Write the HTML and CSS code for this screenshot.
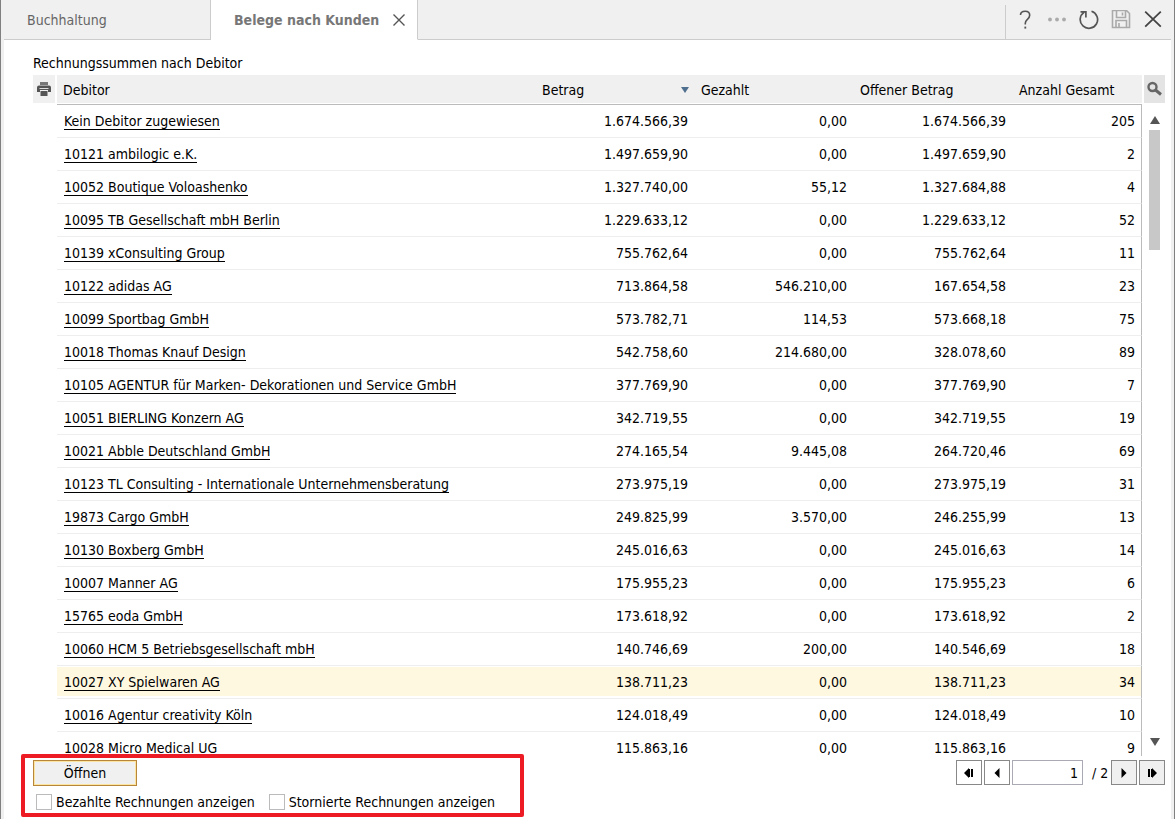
FILE: index.html
```html
<!DOCTYPE html>
<html lang="de">
<head>
<meta charset="utf-8">
<title>Belege nach Kunden</title>
<link rel="stylesheet" href="styles.css">
</head>
<body>
<div class="window">
  <header class="topbar">
    <button class="tab" type="button">Buchhaltung</button>
    <div class="tab tab-active">
      <span>Belege nach Kunden</span>
      <button class="icon-btn tab-close" type="button" aria-label="Tab schließen">
        <svg width="14" height="14" viewBox="0 0 14 14"><path d="M1.500 1.500L12.500 12.500M12.500 1.500L1.500 12.500" stroke="#555" stroke-width="1.400" fill="none"/></svg>
      </button>
    </div>
    <div class="tools">
      <button class="icon-btn" type="button" aria-label="Hilfe">
        <svg width="20" height="20" viewBox="0 0 20 20"><path d="M5.500 5C5.500 2.500 7.500 1.200 10.200 1.200C13 1.200 14.700 2.800 14.700 5.300C14.700 7.500 13.500 8.500 12.200 9.600C10.900 10.700 10.300 11.500 10.300 13.300V14.500" stroke="#555" stroke-width="1.600" fill="none"/><rect x="9.400" y="16.600" width="1.800" height="2" fill="#555"/></svg>
      </button>
      <button class="icon-btn" type="button" aria-label="Mehr">
        <svg width="20" height="20" viewBox="0 0 20 20"><g fill="#aaa"><circle cx="3" cy="9.500" r="1.900"/><circle cx="10" cy="9.500" r="1.900"/><circle cx="17" cy="9.500" r="1.900"/></g></svg>
      </button>
      <button class="icon-btn" type="button" aria-label="Aktualisieren">
        <svg width="20" height="20" viewBox="0 0 20 20"><path d="M12.500 1.300A8.700 8.700 0 1 1 5 2.400M1.500 1.800H6.900V7.400" stroke="#555" stroke-width="1.700" fill="none"/></svg>
      </button>
      <button class="icon-btn" type="button" aria-label="Speichern">
        <svg width="20" height="20" viewBox="0 0 20 20"><path d="M1.500 0.500H15.500L18.500 3.500V17.500H1.500ZM5.500 0.500V7.500H14.500V0.500M11.500 2.500V5.500M5 17.500V10.500H15.500V17.500M8 13V17.500" stroke="#aaa" stroke-width="1.600" fill="none"/></svg>
      </button>
      <button class="icon-btn" type="button" aria-label="Schließen">
        <svg width="20" height="20" viewBox="0 0 20 20"><path d="M2.200 1.700L17.800 16.700M17.800 1.700L2.200 16.700" stroke="#444" stroke-width="1.800" fill="none"/></svg>
      </button>
    </div>
  </header>

  <main class="content">
    <h1 class="title">Rechnungssummen nach Debitor</h1>
    <div class="grid">
      <button class="side-btn" type="button" aria-label="Drucken">
        <svg width="14" height="14" viewBox="0 0 14 14"><path d="M3 0H11V3H3Z" fill="#777"/><path d="M2 3.500H12Q14 3.500 14 5.500V10H11V8H3V10H0V5.500Q0 3.500 2 3.500Z" fill="#555"/><path d="M2.500 6.500H11.500" stroke="#ddd"/><path d="M3.500 9H10.500V14H3.500Z" fill="#555"/></svg>
      </button>
      <div class="table-wrap">
        <table class="table">
          <colgroup><col><col class="col-sum"><col class="col-sum"><col class="col-sum"><col class="col-count"></colgroup>
          <thead><tr>
            <th>Debitor</th>
            <th><span class="sorted">Betrag <svg width="8" height="6" viewBox="0 0 8 6"><path d="M0 0H8L4 6Z" fill="#4f6f8f"/></svg></span></th>
            <th>Gezahlt</th><th>Offener Betrag</th><th>Anzahl Gesamt</th>
          </tr></thead>
          <tbody>
            <tr><td><a href="#">Kein Debitor zugewiesen</a></td><td>1.674.566,39</td><td>0,00</td><td>1.674.566,39</td><td>205</td></tr>
            <tr><td><a href="#">10121 ambilogic e.K.</a></td><td>1.497.659,90</td><td>0,00</td><td>1.497.659,90</td><td>2</td></tr>
            <tr><td><a href="#">10052 Boutique Voloashenko</a></td><td>1.327.740,00</td><td>55,12</td><td>1.327.684,88</td><td>4</td></tr>
            <tr><td><a href="#">10095 TB Gesellschaft mbH Berlin</a></td><td>1.229.633,12</td><td>0,00</td><td>1.229.633,12</td><td>52</td></tr>
            <tr><td><a href="#">10139 xConsulting Group</a></td><td>755.762,64</td><td>0,00</td><td>755.762,64</td><td>11</td></tr>
            <tr><td><a href="#">10122 adidas AG</a></td><td>713.864,58</td><td>546.210,00</td><td>167.654,58</td><td>23</td></tr>
            <tr><td><a href="#">10099 Sportbag GmbH</a></td><td>573.782,71</td><td>114,53</td><td>573.668,18</td><td>75</td></tr>
            <tr><td><a href="#">10018 Thomas Knauf Design</a></td><td>542.758,60</td><td>214.680,00</td><td>328.078,60</td><td>89</td></tr>
            <tr><td><a href="#">10105 AGENTUR für Marken- Dekorationen und Service GmbH</a></td><td>377.769,90</td><td>0,00</td><td>377.769,90</td><td>7</td></tr>
            <tr><td><a href="#">10051 BIERLING Konzern AG</a></td><td>342.719,55</td><td>0,00</td><td>342.719,55</td><td>19</td></tr>
            <tr><td><a href="#">10021 Abble Deutschland GmbH</a></td><td>274.165,54</td><td>9.445,08</td><td>264.720,46</td><td>69</td></tr>
            <tr><td><a href="#">10123 TL Consulting - Internationale Unternehmensberatung</a></td><td>273.975,19</td><td>0,00</td><td>273.975,19</td><td>31</td></tr>
            <tr><td><a href="#">19873 Cargo GmbH</a></td><td>249.825,99</td><td>3.570,00</td><td>246.255,99</td><td>13</td></tr>
            <tr><td><a href="#">10130 Boxberg GmbH</a></td><td>245.016,63</td><td>0,00</td><td>245.016,63</td><td>14</td></tr>
            <tr><td><a href="#">10007 Manner AG</a></td><td>175.955,23</td><td>0,00</td><td>175.955,23</td><td>6</td></tr>
            <tr><td><a href="#">15765 eoda GmbH</a></td><td>173.618,92</td><td>0,00</td><td>173.618,92</td><td>2</td></tr>
            <tr><td><a href="#">10060 HCM 5 Betriebsgesellschaft mbH</a></td><td>140.746,69</td><td>200,00</td><td>140.546,69</td><td>18</td></tr>
            <tr class="highlight"><td><a href="#">10027 XY Spielwaren AG</a></td><td>138.711,23</td><td>0,00</td><td>138.711,23</td><td>34</td></tr>
            <tr><td><a href="#">10016 Agentur creativity Köln</a></td><td>124.018,49</td><td>0,00</td><td>124.018,49</td><td>10</td></tr>
            <tr><td><a href="#">10028 Micro Medical UG</a></td><td>115.863,16</td><td>0,00</td><td>115.863,16</td><td>9</td></tr>
          </tbody>
        </table>
      </div>
      <div class="side">
        <button class="side-btn search" type="button" aria-label="Suchen">
          <svg width="16" height="16" viewBox="0 0 16 16"><circle cx="5.500" cy="6" r="4" stroke="#666" stroke-width="2.400" fill="none"/><path d="M8.500 9L14 13.500" stroke="#666" stroke-width="3"/></svg>
        </button>
        <div class="scrollbar">
          <button class="icon-btn" type="button" aria-label="Nach oben"><svg width="10" height="8" viewBox="0 0 10 8"><path d="M5 0L10 8H0Z" fill="#555"/></svg></button>
          <div class="track"><div class="thumb"></div></div>
          <button class="icon-btn" type="button" aria-label="Nach unten"><svg width="10" height="8" viewBox="0 0 10 8"><path d="M0 0H10L5 8Z" fill="#555"/></svg></button>
        </div>
      </div>
    </div>

    <footer class="footer">
      <div class="actions">
        <button class="open-btn" type="button">Öffnen</button>
        <div class="checks">
          <label class="check"><input type="checkbox">Bezahlte Rechnungen anzeigen</label>
          <label class="check"><input type="checkbox">Stornierte Rechnungen anzeigen</label>
        </div>
        <div class="marker"></div>
      </div>
      <div class="pager">
        <button class="page-btn" type="button" aria-label="Erste Seite"><svg width="10" height="10" viewBox="0 0 10 10"><path d="M5 0V10L0 5ZM5 1H6V9H5ZM7 1H9V9H7Z"/></svg></button>
        <button class="page-btn" type="button" aria-label="Vorherige Seite"><svg width="10" height="10" viewBox="0 0 10 10"><path d="M7.500 0V10L2.500 5Z"/></svg></button>
        <input class="page-input" type="text" value="1" aria-label="Seite">
        <span class="page-total">/ 2</span>
        <button class="page-btn page-btn-on" type="button" aria-label="Nächste Seite"><svg width="10" height="10" viewBox="0 0 10 10"><path d="M2.500 0V10L7.500 5Z"/></svg></button>
        <button class="page-btn page-btn-on" type="button" aria-label="Letzte Seite"><svg width="10" height="10" viewBox="0 0 10 10"><path d="M5 0V10L10 5ZM1 1H3V9H1ZM4 1H5V9H4Z"/></svg></button>
      </div>
    </footer>
  </main>
</div>
</body>
</html>
```
FILE: styles.css
```css
* { box-sizing: border-box; }

body {
  margin: 0;
  color: #000;
  background: #fff;
}

body, button, input {
  font-family: "DejaVu Sans Condensed", "Noto Sans", sans-serif;
  font-size: 14px;
}

button {
  padding: 0;
  margin: 0;
  border: 0;
  background: none;
  color: inherit;
}

svg { display: block; }

.window {
  height: 100vh;
  display: flex;
  flex-direction: column;
  border-left: 1px solid #808080;
  border-right: 1px solid #808080;
}

.topbar {
  display: flex;
  flex: none;
  height: 40px;
  padding: 0 3px;
  background: #f0f0f0;
}

.tab {
  flex: none;
  width: 207px;
  padding-left: 23px;
  border-right: 1px solid #ccc;
  border-bottom: 1px solid #ccc;
  text-align: left;
  color: #666;
}

.tab-active {
  display: flex;
  align-items: center;
  justify-content: space-between;
  padding-right: 11px;
  border-bottom-color: #fff;
  background: #fff;
  font-weight: bold;
  color: #777;
}

.icon-btn {
  display: flex;
  align-items: center;
  justify-content: center;
}

.tools {
  flex: 1;
  display: flex;
  justify-content: flex-end;
  align-items: center;
  gap: 12px;
  padding-right: 8px;
  border-bottom: 1px solid #ccc;
}

.tools::before {
  content: "";
  align-self: flex-end;
  width: 1px;
  height: 34px;
  margin-right: -3px;
  background: #ccc;
}

.content {
  flex: 1;
  min-height: 0;
  display: flex;
  flex-direction: column;
  padding: 13px 6px 0 29px;
  border-left: 3px solid #f0f0f0;
  border-right: 3px solid #f0f0f0;
}

.title {
  flex: none;
  margin: 0 0 2px;
  font-size: 14px;
  font-weight: normal;
  line-height: 20px;
}

.grid {
  flex: 1;
  min-height: 0;
  display: flex;
  gap: 2px;
}

.side-btn {
  flex: none;
  display: flex;
  align-items: center;
  justify-content: center;
  width: 22px;
  height: 28px;
  background: #f0f0f0;
}

.search {
  width: 21px;
  background: #e4e4e4;
}

.side {
  display: flex;
  flex-direction: column;
}

.table-wrap {
  flex: 1;
  min-width: 0;
  overflow: hidden;
}

.table {
  width: 100%;
  table-layout: fixed;
  border-collapse: separate;
  border-spacing: 0;
}

.col-sum { width: 159px; }
.col-count { width: 129px; }

.table th {
  height: 30px;
  padding: 0 6px;
  border-bottom: 1px solid #bbb;
  background: #f0f0f0;
  box-shadow: inset 0 -1px #fff;
  text-align: left;
  font-weight: normal;
}

.sorted {
  display: flex;
  align-items: center;
  justify-content: space-between;
}

.table td {
  height: 33px;
  padding: 0 7px;
  border-bottom: 1px solid #eee;
  text-align: right;
  white-space: nowrap;
}

.table td:first-child { text-align: left; }

.table td:last-child {
  padding-right: 6px;
  border-right: 1px solid #bbb;
}

.table a {
  border-bottom: 1px solid #000;
  color: #000;
  text-decoration: none;
}

.highlight td {
  background: #fff8e1;
  box-shadow: inset 0 1px #fff, inset 0 -2px #fff;
}

.scrollbar {
  flex: 1;
  display: flex;
  flex-direction: column;
  align-items: center;
  padding: 13px 0 10px;
}

.track {
  flex: 1;
  padding: 6px 0;
}

.thumb {
  width: 11px;
  height: 20%;
  background: #c8c8c8;
}

.footer {
  flex: none;
  display: flex;
  justify-content: space-between;
  align-items: flex-start;
  padding: 4px 0 8px;
}

.actions { position: relative; }

.open-btn {
  width: 104px;
  height: 26px;
  border: 1px solid #b8863a;
  background: #f0f0f0;
  box-shadow: inset 0 0 0 1px #fce5a0;
}

.checks {
  display: flex;
  gap: 14px;
  padding: 7px 0 0 3px;
}

.check {
  display: flex;
  align-items: center;
  gap: 4px;
  line-height: 18px;
}

.check input {
  appearance: none;
  width: 16px;
  height: 16px;
  margin: 0;
  border: 1px solid #bbb;
  background: #fff;
}

/* Red frame around the open button and its options */
.marker {
  position: absolute;
  inset: -6px -29px -6px -12px;
  border: 4px solid #ed1c24;
  border-radius: 2px;
  pointer-events: none;
}

.pager {
  display: flex;
  align-items: center;
  gap: 2px;
}

.page-btn {
  display: flex;
  align-items: center;
  justify-content: center;
  width: 26px;
  height: 25px;
  border: 1px solid #888;
}

.page-btn-on { background: #f0f0f0; }

.page-input {
  width: 71px;
  height: 25px;
  padding: 0 4px;
  border: 1px solid #aaaab4;
  text-align: right;
}

.page-total {
  width: 24px;
  padding-left: 7px;
  white-space: nowrap;
}
```
